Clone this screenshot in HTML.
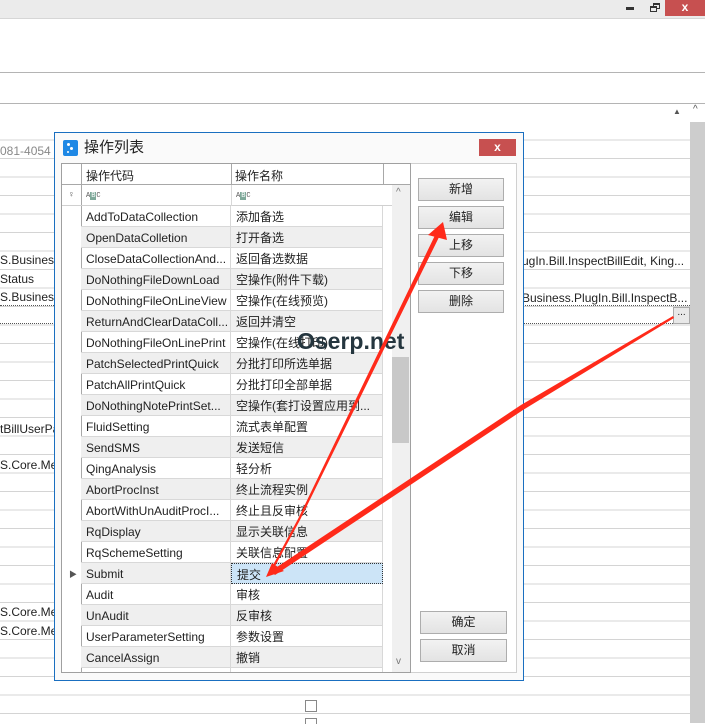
<!DOCTYPE html>
<html><head><meta charset="utf-8">
<style>
*{margin:0;padding:0;box-sizing:border-box}
body{width:705px;height:723px;overflow:hidden;background:#fff;position:relative;font-family:"Liberation Sans","Noto Sans CJK SC",sans-serif;font-size:12px;color:#222}
.a{position:absolute}
.bgrows{left:0;top:122px;width:690px;height:601px;background:repeating-linear-gradient(to bottom,#fff 0,#fff 17.5px,#d4d4d4 17.5px,#d4d4d4 18.5px)}
.t{position:absolute;white-space:nowrap;font-size:12px;line-height:14px;color:#222}
.btn{position:absolute;width:86px;height:23px;border:1px solid #adadad;background:linear-gradient(#f2f2f2,#e3e3e3);text-align:center;line-height:21px;font-size:12px;color:#222}
.row{position:absolute;left:81px;width:302px;height:21px}
.row div{position:absolute;top:0;height:21px;line-height:22px;border-bottom:1px solid #d8d8d8;border-right:1px solid #d8d8d8;padding-left:5px;white-space:nowrap;overflow:hidden}
.c1{left:0;width:150px}.c2{left:150px;width:152px}
.g div{background:#efefef}
.abc{position:absolute;font-size:7px;font-family:"Liberation Mono",monospace;color:#555;letter-spacing:0}
.abc b{background:#7fa99a;color:#fff;font-weight:normal;padding:0 1px}
</style></head><body>
<div class="a" style="left:0;top:0;width:705px;height:19px;background:#ebebeb;border-bottom:1px solid #d6d6d6"></div>
<div class="a" style="left:626px;top:7px;width:8px;height:3px;background:#333"></div>
<div class="a" style="left:653px;top:3px;width:7px;height:6px;border:1px solid #333;border-top-width:2px"></div>
<div class="a" style="left:650px;top:6px;width:7px;height:6px;border:1px solid #333;border-top-width:2px;background:#ebebeb"></div>
<div class="a" style="left:665px;top:0;width:40px;height:16px;background:#c75050;color:#fff;text-align:center;font-size:12px;line-height:15px;font-weight:bold">x</div>
<div class="a" style="left:0;top:72px;width:705px;height:1px;background:#b4b4b4"></div>
<div class="a" style="left:0;top:103px;width:705px;height:1px;background:#b4b4b4"></div>
<div class="a" style="left:673px;top:107px;font-size:8px;color:#555">▲</div>
<div class="a" style="left:693px;top:104px;font-size:10px;color:#555">^</div>
<div class="a bgrows"></div>
<div class="a" style="left:690px;top:122px;width:15px;height:601px;background:#cdcdcd"></div>
<div class="a" style="left:0;top:305px;width:690px;border-top:1px dotted #555"></div>
<div class="a" style="left:0;top:323px;width:673px;border-top:1px dotted #555"></div>
<div class="a" style="left:673px;top:307px;width:17px;height:17px;background:#e8e8e8;border:1px solid #aaa;text-align:center;font-size:10px;line-height:10px">...</div>
<div class="t" style="left:0;top:144px;color:#888">081-4054</div>
<div class="t" style="left:0;top:253px">S.Business</div>
<div class="t" style="left:0;top:272px">Status</div>
<div class="t" style="left:0;top:290px">S.Business</div>
<div class="t" style="left:0;top:422px">tBillUserPar</div>
<div class="t" style="left:0;top:458px">S.Core.Me</div>
<div class="t" style="left:0;top:605px">S.Core.Me</div>
<div class="t" style="left:0;top:624px">S.Core.Me</div>
<div class="t" style="left:522px;top:254px">ugIn.Bill.InspectBillEdit, King...</div>
<div class="t" style="left:522px;top:291px">Business.PlugIn.Bill.InspectB...</div>
<div class="a" style="left:305px;top:700px;width:12px;height:12px;border:1px solid #888;background:#fff"></div>
<div class="a" style="left:305px;top:718px;width:12px;height:6px;border:1px solid #888;border-bottom:0;background:#fff"></div>

<div class="a" style="left:54px;top:132px;width:470px;height:549px;background:#fafafa;border:1px solid #1a6fc0"></div>
<div class="a" style="left:63px;top:140px;width:15px;height:16px;background:#1e88e5;border-radius:2px"></div>
<div class="a" style="left:67px;top:143px;width:3px;height:3px;background:#fff;border-radius:2px"></div>
<div class="a" style="left:70px;top:147px;width:3px;height:3px;background:#fff;border-radius:2px"></div>
<div class="a" style="left:67px;top:151px;width:2px;height:2px;background:#fff;border-radius:2px"></div>
<div class="a" style="left:84px;top:138px;font-size:15px;line-height:20px;color:#222">操作列表</div>
<div class="a" style="left:479px;top:139px;width:37px;height:17px;background:#c75050;color:#fff;text-align:center;font-weight:bold;font-size:12px;line-height:16px">x</div>

<div class="a" style="left:410px;top:163px;width:107px;height:510px;background:#fff;border:1px solid #d0d0d0"></div>
<div class="a" style="left:61px;top:163px;width:350px;height:510px;background:#fff;border:1px solid #a0a0a0"></div>
<div class="a" style="left:62px;top:164px;width:348px;height:21px;border-bottom:1px solid #a8a8a8;background:#fff"></div>
<div class="a" style="left:81px;top:164px;width:1px;height:509px;background:#a8a8a8"></div>
<div class="a" style="left:231px;top:164px;width:1px;height:21px;background:#a8a8a8"></div>
<div class="a" style="left:383px;top:164px;width:1px;height:21px;background:#a8a8a8"></div>
<div class="a" style="left:86px;top:167px;font-size:12px">操作代码</div>
<div class="a" style="left:235px;top:167px;font-size:12px">操作名称</div>
<div class="a" style="left:62px;top:185px;width:330px;height:21px;border-bottom:1px solid #d0d0d0"></div>
<div class="a" style="left:231px;top:185px;width:1px;height:21px;background:#d8d8d8"></div>
<div class="a" style="left:68px;top:189px;font-size:9px;color:#555">♀</div>
<div class="abc" style="left:86px;top:192px">A<b>B</b>C</div>
<div class="abc" style="left:236px;top:192px">A<b>B</b>C</div>
<div class="a" style="left:392px;top:185px;width:18px;height:487px;background:#f0f0f0"></div>
<div class="a" style="left:392px;top:357px;width:17px;height:86px;background:#c8c8c8"></div>
<div class="a" style="left:396px;top:187px;font-size:10px;color:#777">^</div>
<div class="a" style="left:396px;top:656px;font-size:10px;color:#777">v</div>

<div class="row" style="top:206px"><div class="c1">AddToDataCollection</div><div class="c2">添加备选</div></div>
<div class="row g" style="top:227px"><div class="c1">OpenDataColletion</div><div class="c2">打开备选</div></div>
<div class="row" style="top:248px"><div class="c1">CloseDataCollectionAnd...</div><div class="c2">返回备选数据</div></div>
<div class="row g" style="top:269px"><div class="c1">DoNothingFileDownLoad</div><div class="c2">空操作(附件下载)</div></div>
<div class="row" style="top:290px"><div class="c1">DoNothingFileOnLineView</div><div class="c2">空操作(在线预览)</div></div>
<div class="row g" style="top:311px"><div class="c1">ReturnAndClearDataColl...</div><div class="c2">返回并清空</div></div>
<div class="row" style="top:332px"><div class="c1">DoNothingFileOnLinePrint</div><div class="c2">空操作(在线打印)</div></div>
<div class="row g" style="top:353px"><div class="c1">PatchSelectedPrintQuick</div><div class="c2">分批打印所选单据</div></div>
<div class="row" style="top:374px"><div class="c1">PatchAllPrintQuick</div><div class="c2">分批打印全部单据</div></div>
<div class="row g" style="top:395px"><div class="c1">DoNothingNotePrintSet...</div><div class="c2">空操作(套打设置应用到...</div></div>
<div class="row" style="top:416px"><div class="c1">FluidSetting</div><div class="c2">流式表单配置</div></div>
<div class="row g" style="top:437px"><div class="c1">SendSMS</div><div class="c2">发送短信</div></div>
<div class="row" style="top:458px"><div class="c1">QingAnalysis</div><div class="c2">轻分析</div></div>
<div class="row g" style="top:479px"><div class="c1">AbortProcInst</div><div class="c2">终止流程实例</div></div>
<div class="row" style="top:500px"><div class="c1">AbortWithUnAuditProcI...</div><div class="c2">终止且反审核</div></div>
<div class="row g" style="top:521px"><div class="c1">RqDisplay</div><div class="c2">显示关联信息</div></div>
<div class="row" style="top:542px"><div class="c1">RqSchemeSetting</div><div class="c2">关联信息配置</div></div>
<div class="row g" style="top:563px"><div class="c1">Submit</div><div class="c2" style="background:#cce4f7;border:1px dotted #333">提交</div></div>
<div class="row" style="top:584px"><div class="c1">Audit</div><div class="c2">审核</div></div>
<div class="row g" style="top:605px"><div class="c1">UnAudit</div><div class="c2">反审核</div></div>
<div class="row" style="top:626px"><div class="c1">UserParameterSetting</div><div class="c2">参数设置</div></div>
<div class="row g" style="top:647px"><div class="c1">CancelAssign</div><div class="c2">撤销</div></div>
<div class="row" style="top:668px;height:4px;overflow:hidden"><div class="c1"></div><div class="c2"></div></div>
<div class="a" style="left:69px;top:569px;font-size:8px;color:#555">▶</div>

<div class="btn" style="left:418px;top:178px">新增</div>
<div class="btn" style="left:418px;top:206px">编辑</div>
<div class="btn" style="left:418px;top:234px">上移</div>
<div class="btn" style="left:418px;top:262px">下移</div>
<div class="btn" style="left:418px;top:290px">删除</div>
<div class="btn" style="left:420px;top:611px;width:87px">确定</div>
<div class="btn" style="left:420px;top:639px;width:87px">取消</div>

<div class="a" style="left:297px;top:327px;font-size:23px;line-height:28px;color:#25363f;font-weight:bold;font-family:'Liberation Sans',sans-serif">Oserp.net</div>

<svg class="a" style="left:0;top:0" width="705" height="723">
<polygon points="272,567 274,568 300,520 443,229 439,227 298,519" fill="#ff2a1a"/>
<polygon points="443,222 428,235 447,240" fill="#ff2a1a"/>
<polygon points="673,316 674,318 523,410 275,575 271,571 521,405" fill="#ff2a1a"/>
<polygon points="266,577 272,563 284,571" fill="#ff2a1a"/>
</svg>
</body></html>
